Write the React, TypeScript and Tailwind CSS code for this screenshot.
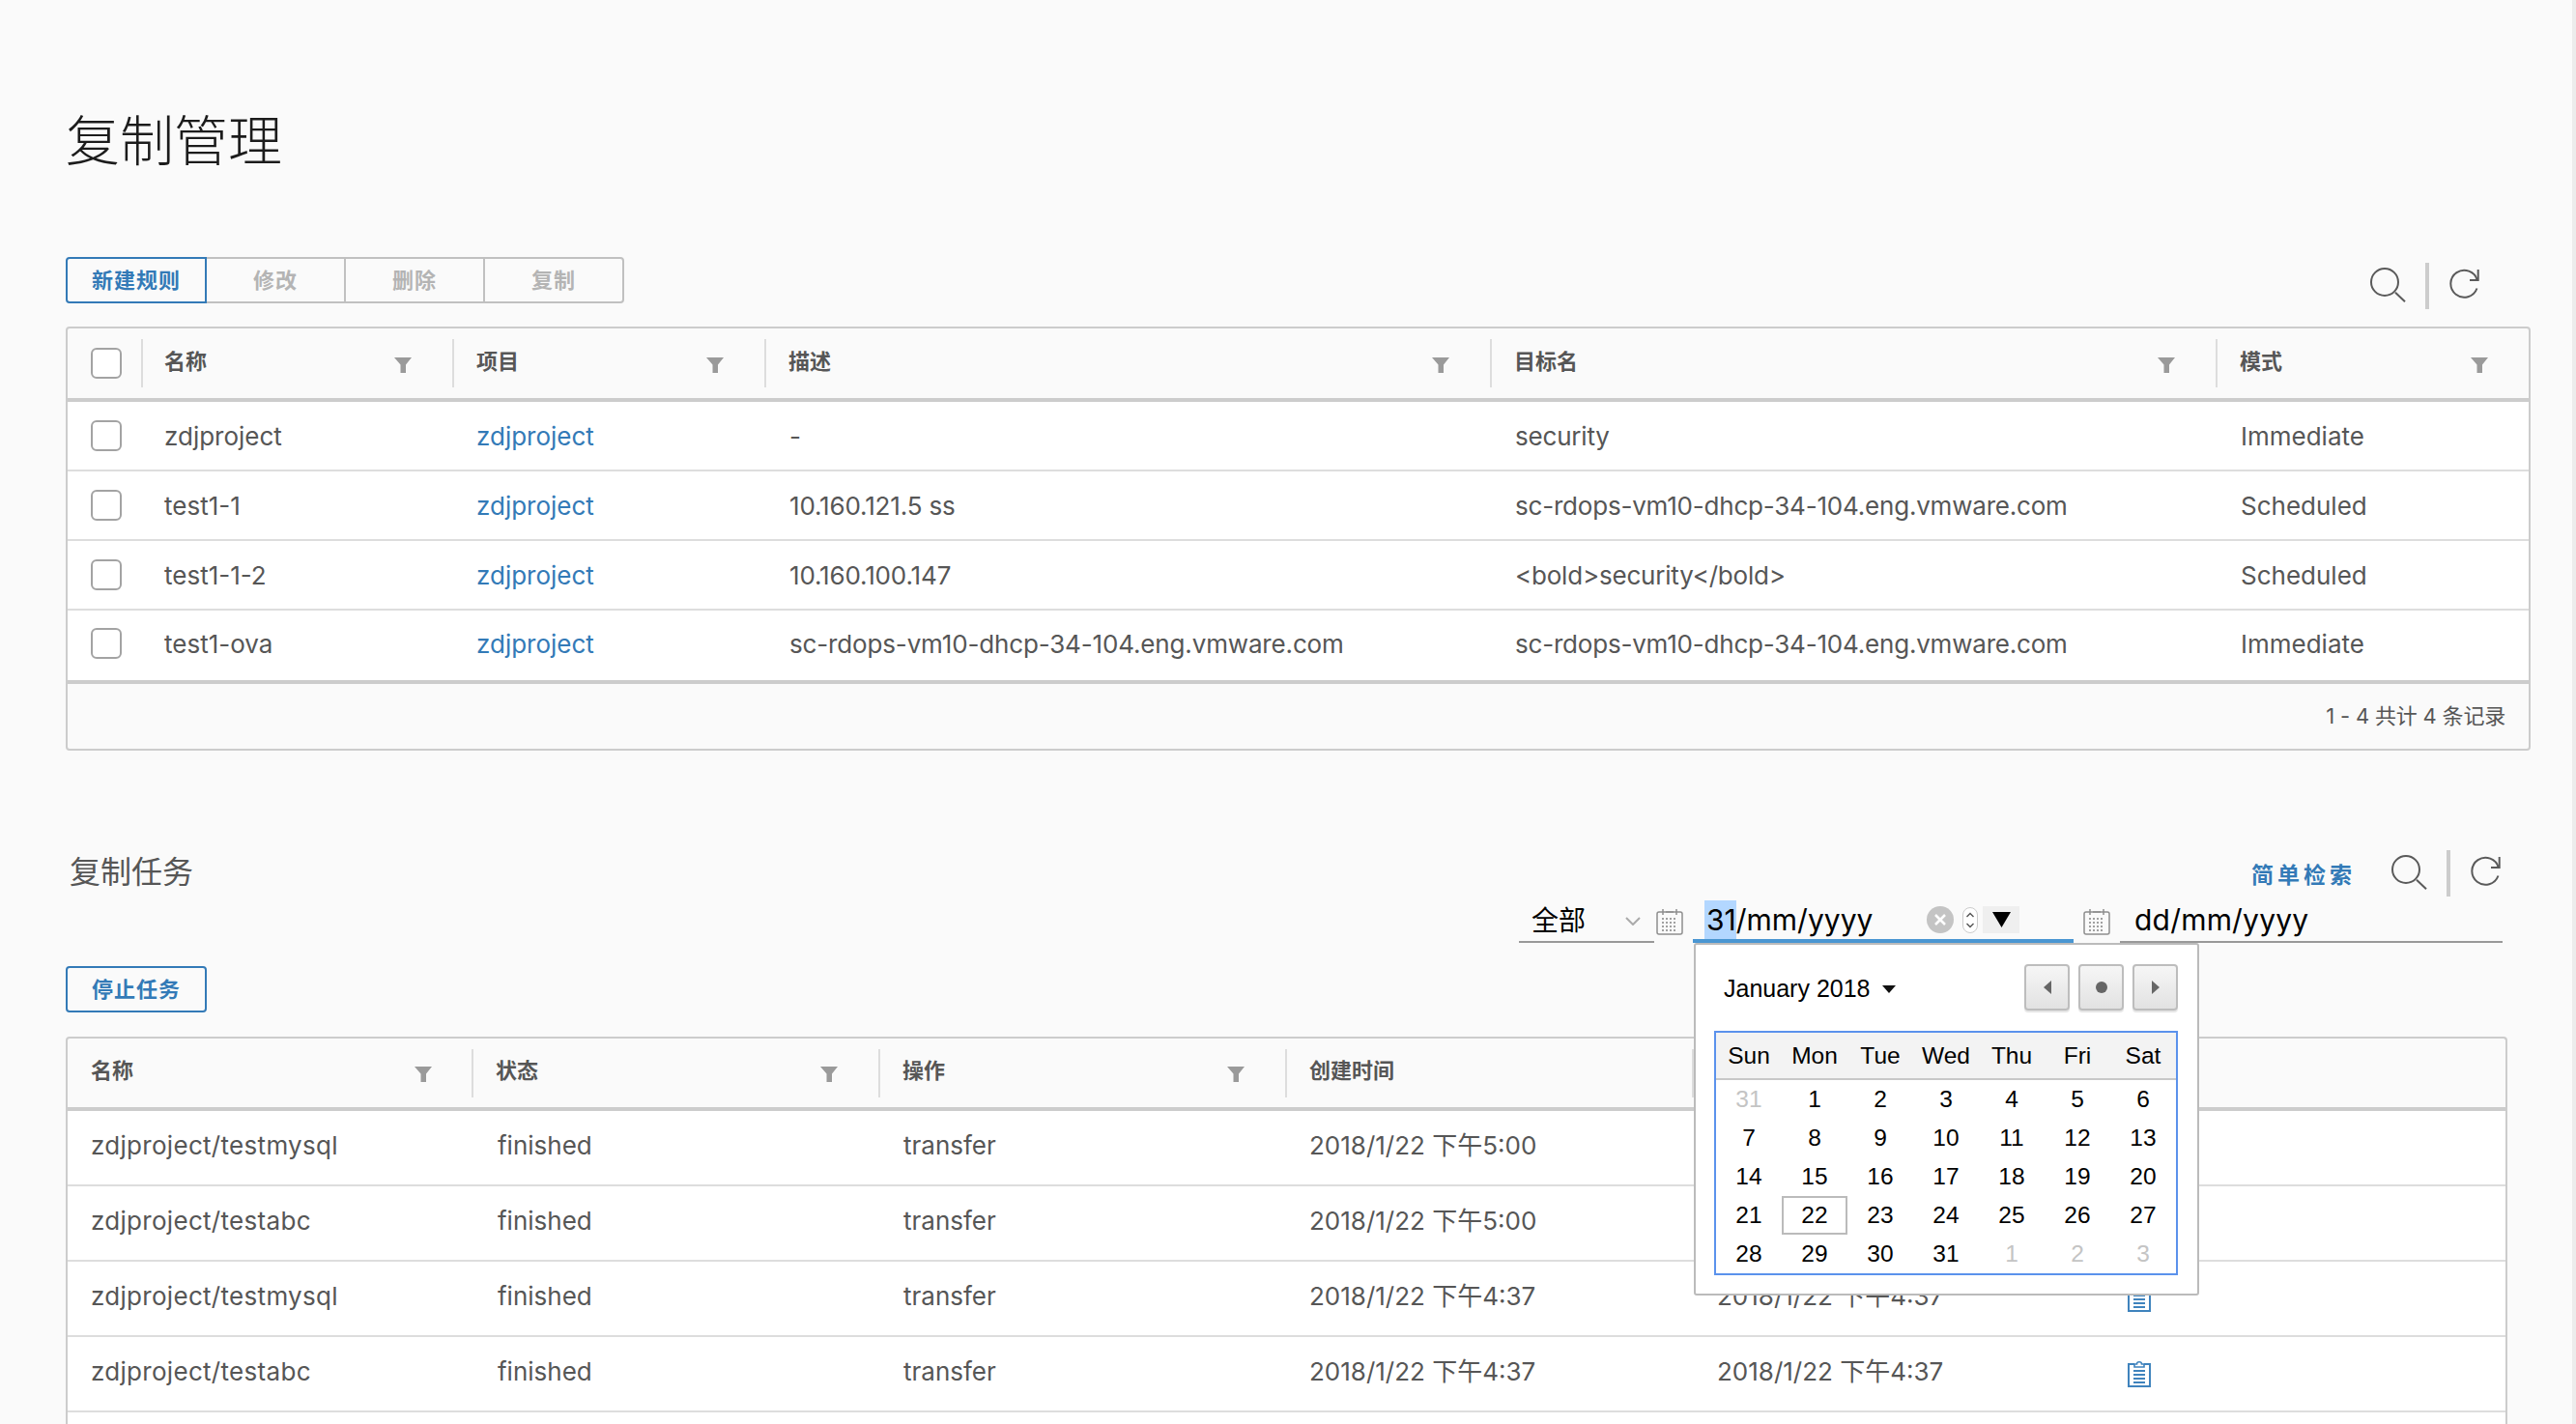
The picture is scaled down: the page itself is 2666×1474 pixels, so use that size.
import React from "react";

const ruleRows = [
  { name: "zdjproject", project: "zdjproject", desc: "-", target: "security", mode: "Immediate" },
  { name: "test1-1", project: "zdjproject", desc: "10.160.121.5 ss", target: "sc-rdops-vm10-dhcp-34-104.eng.vmware.com", mode: "Scheduled" },
  { name: "test1-1-2", project: "zdjproject", desc: "10.160.100.147", target: "<bold>security</bold>", mode: "Scheduled" },
  { name: "test1-ova", project: "zdjproject", desc: "sc-rdops-vm10-dhcp-34-104.eng.vmware.com", target: "sc-rdops-vm10-dhcp-34-104.eng.vmware.com", mode: "Immediate" },
];

// first two rows of the last columns sit behind the date popup
const jobRows = [
  { name: "zdjproject/testmysql", created: "2018/1/22 下午5:00", updated: "", log: false },
  { name: "zdjproject/testabc", created: "2018/1/22 下午5:00", updated: "", log: false },
  { name: "zdjproject/testmysql", created: "2018/1/22 下午4:37", updated: "2018/1/22 下午4:37", log: true },
  { name: "zdjproject/testabc", created: "2018/1/22 下午4:37", updated: "2018/1/22 下午4:37", log: true },
];

const weeks = [
  [31, 1, 2, 3, 4, 5, 6],
  [7, 8, 9, 10, 11, 12, 13],
  [14, 15, 16, 17, 18, 19, 20],
  [21, 22, 23, 24, 25, 26, 27],
  [28, 29, 30, 31, 1, 2, 3],
];

const FilterIcon = () => (
  <svg width="18" height="16" viewBox="0 0 18 16" className="shrink-0 mt-[3px]">
    <path d="M0 0H18L12 7.5V16H6.5V7.5Z" fill="#9a9a9a" />
  </svg>
);

const CalendarIcon = () => (
  <svg width="28" height="28" viewBox="0 0 28 28" fill="none" className="shrink-0">
    <rect x="1" y="4" width="26" height="23" rx="2" stroke="#8f8f8f" strokeWidth="1.5" />
    <path d="M7 1V7M21 1V7M10 4H18" stroke="#8f8f8f" strokeWidth="1.5" />
    <path d="M6 11H22M6 15H22M6 19H22M6 23H22" stroke="#a0a0a0" strokeWidth="2" strokeDasharray="2 2" />
  </svg>
);

const SearchRefresh = () => (
  <div className="flex items-start">
    <svg width="38" height="38" viewBox="0 0 38 38" fill="none" className="mt-[4px]">
      <circle cx="15" cy="16" r="14" stroke="#5a5a5a" strokeWidth="2" />
      <path d="M26 26.7L36 36.3" stroke="#5a5a5a" strokeWidth="2" />
    </svg>
    <div className="ml-[19px] w-[4px] h-[48px] bg-[#cccccc]" />
    <svg width="34" height="34" viewBox="0 0 34 34" fill="none" className="ml-[20px] mt-[4px]">
      <path d="M29.8 13.9A14 14 0 1 0 29.5 22.5" stroke="#5a5a5a" strokeWidth="2" />
      <path d="M30.7 3V14H22" stroke="#5a5a5a" strokeWidth="2" />
    </svg>
  </div>
);

const Checkbox = () => <div className="w-[32px] h-[32px] rounded-[6px] border-2 border-[#a3a3a3] bg-white" />;

const HeadCell = ({ label, filter = true }: { label?: string; filter?: boolean }) => (
  <div className="flex h-[50px] items-center justify-between border-l-2 border-[#dddddd] pl-[23px] pr-[42px]">
    <span className="text-[22px] font-semibold -translate-y-[2px]">{label}</span>
    {filter && <FilterIcon />}
  </div>
);

const ClipboardIcon = () => (
  <svg width="24" height="28" viewBox="0 0 24 28" fill="none">
    <path d="M7 4H1V27H23V4H17" stroke="#3f83bd" strokeWidth="2" />
    <path d="M7 7V4H9.5C9.5 1 14.5 1 14.5 4H17V7Z" stroke="#3f83bd" strokeWidth="1.6" />
    <path d="M6 11H18M6 15H18M6 19H18M6 23H18" stroke="#3f83bd" strokeWidth="2" />
  </svg>
);

const NavButton = ({ children }: { children: React.ReactNode }) => (
  <div className="flex w-[47px] h-[48px] items-center justify-center rounded-[4px] border-2 border-[#bdbdbd] bg-gradient-to-b from-[#f6f6f6] to-[#e2e2e2] shadow-[0_2px_1px_#e4e4e4]">
    {children}
  </div>
);

const DatePopup = () => (
  <div className="absolute left-[1px] top-[44px] z-10 w-[523px] h-[365px] rounded-[3px] border-2 border-[#bbbbbb] bg-white pt-[20px] pl-[19px] font-['Liberation_Sans',sans-serif] text-[24.5px] text-black">
    <div className="flex h-[48px] w-[480px] items-center justify-between">
      <div className="flex items-center pl-[10px] translate-y-[2px]">
        <span className="text-[25px]">January 2018</span>
        <svg width="14" height="8" viewBox="0 0 14 8" className="ml-[12px]">
          <path d="M0 0H14L7 8Z" fill="#111111" />
        </svg>
      </div>
      <div className="flex gap-[9px]">
        <NavButton>
          <svg width="8" height="14" viewBox="0 0 8 14">
            <path d="M8 0V14L0 7Z" fill="#666666" />
          </svg>
        </NavButton>
        <NavButton>
          <div className="w-[12px] h-[12px] rounded-full bg-[#666666]" />
        </NavButton>
        <NavButton>
          <svg width="8" height="14" viewBox="0 0 8 14">
            <path d="M0 0V14L8 7Z" fill="#666666" />
          </svg>
        </NavButton>
      </div>
    </div>
    <div className="mt-[21px] w-[480px] h-[253px] border-2 border-[#5b92ec]">
      <div className="grid h-[49px] grid-cols-7 items-center border-b-2 border-[#c8c8c8] bg-[#f3f3f3] text-center">
        {["Sun", "Mon", "Tue", "Wed", "Thu", "Fri", "Sat"].map((d) => (
          <span key={d} className="translate-y-[1px]">{d}</span>
        ))}
      </div>
      {weeks.map((week, w) => (
        <div key={w} className="grid h-[40px] grid-cols-7 text-center leading-[40px]">
          {week.map((day, i) => {
            const muted = (w === 0 && i === 0) || (w === 4 && i > 3);
            const today = w === 3 && i === 1;
            return (
              <div
                key={i}
                className={today ? "border-2 border-[#bbbbbb] leading-[36px]" : muted ? "text-[#c4c4c4]" : ""}
              >
                {day}
              </div>
            );
          })}
        </div>
      ))}
    </div>
  </div>
);

export default function App() {
  return (
    <div className="flex h-[1474px] overflow-hidden bg-[#fafafa] font-['Inter','Noto_Sans_CJK_SC',sans-serif] text-[#565656]">
      <main className="flex-1 pl-[68px]">
        <h1 className="mt-[106px] h-[80px] text-[56px] leading-[80px] font-extralight text-[#1c1c1c]">复制管理</h1>

        {/* Rules toolbar */}
        <div className="mt-[80px] flex h-[48px] w-[2551px] justify-between pr-[51px]">
          <div className="flex text-[22px] font-semibold tracking-[1px]">
            <button className="relative z-[1] h-[48px] w-[146px] rounded-l-[4px] border-2 border-[#337ab7] text-[#337ab7]">新建规则</button>
            <button className="-ml-[2px] h-[48px] w-[146px] border-2 border-[#c0c0c0] text-[#b4b4b4]">修改</button>
            <button className="-ml-[2px] h-[48px] w-[146px] border-2 border-[#c0c0c0] text-[#b4b4b4]">删除</button>
            <button className="-ml-[2px] h-[48px] w-[146px] rounded-r-[4px] border-2 border-[#c0c0c0] text-[#b4b4b4]">复制</button>
          </div>
          <div className="mt-[6px]">
            <SearchRefresh />
          </div>
        </div>

        {/* Rules table */}
        <div className="mt-[24px] w-[2551px] rounded-[4px] border-2 border-[#cccccc]">
          <div className="grid h-[76px] grid-cols-[76px_322px_323px_751px_751px_1fr] items-center border-b-4 border-[#cccccc]">
            <div className="pl-[24px]">
              <Checkbox />
            </div>
            <div className="flex h-[50px] items-center justify-between border-l-2 border-[#dddddd] pl-[22px] pr-[42px]">
              <span className="text-[22px] font-semibold -translate-y-[2px]">名称</span>
              <FilterIcon />
            </div>
            <HeadCell label="项目" />
            <HeadCell label="描述" />
            <HeadCell label="目标名" />
            <HeadCell label="模式" />
          </div>
          {ruleRows.map((row, i) => (
            <div
              key={i}
              className={`grid grid-cols-[76px_322px_323px_751px_751px_1fr] items-center bg-white text-[26px] ${
                i === 3 ? "h-[76px] border-b-4 border-[#cccccc] pb-[4px]" : "h-[72px] border-b-2 border-[#dddddd]"
              }`}
            >
              <div className="pl-[24px]">
                <Checkbox />
              </div>
              <div className="pl-[24px]">{row.name}</div>
              <div className="pl-[25px] text-[#337ab7]">{row.project}</div>
              <div className="pl-[26px] tracking-[-0.15px]">{row.desc}</div>
              <div className="pl-[26px] tracking-[-0.2px]">{row.target}</div>
              <div className="pl-[26px]">{row.mode}</div>
            </div>
          ))}
          <div className="flex h-[67px] items-center justify-end pr-[24px] text-[22px] tracking-[-0.2px]">1 - 4 共计 4 条记录</div>
        </div>

        {/* Jobs header */}
        <div className="mt-[105px] flex w-[2527px] justify-between pr-[5px]">
          <h2 className="ml-[4px] mt-[1px] text-[32px] leading-[40px]">复制任务</h2>
          <div className="flex flex-col items-end">
            <div className="flex h-[48px] items-center">
              <a className="mr-[37px] text-[23px] font-semibold tracking-[4px] text-[#337ab7]">简单检索</a>
              <div className="-mt-[4px]">
                <SearchRefresh />
              </div>
            </div>
            <div className="mt-[2px] flex h-[44px] text-black">
              <div className="flex w-[140px] items-center justify-between border-b-2 border-[#999999] pl-[13px] pr-[14px] text-[28px]">
                全部
                <svg width="16" height="9" viewBox="0 0 16 9" fill="none">
                  <path d="M1 1L8 8L15 1" stroke="#aaaaaa" strokeWidth="2" />
                </svg>
              </div>
              <div className="ml-[2px] flex items-center">
                <CalendarIcon />
              </div>
              <div className="relative ml-[10px] flex h-[44px] w-[394px] items-center border-b-4 border-[#4a96d2] pl-[12px] text-[30px]">
                <span className="flex h-[40px] items-center bg-[#b3d7ff] pl-[2px]">31</span>
                <span>/mm/yyyy</span>
                <div className="ml-auto mr-[56px] flex items-center">
                  <div className="flex h-[28px] w-[28px] items-center justify-center rounded-full bg-[#c4c4c4]">
                    <svg width="12" height="12" viewBox="0 0 12 12" fill="none">
                      <path d="M1 1L11 11M11 1L1 11" stroke="#ffffff" strokeWidth="2.5" />
                    </svg>
                  </div>
                  <div className="ml-[9px] flex h-[27px] w-[16px] items-center justify-center rounded-full border border-[#cccccc] bg-white">
                    <svg width="10" height="19" viewBox="0 0 10 19" fill="none">
                      <path d="M1.5 6L5 2.5L8.5 6M1.5 13L5 16.5L8.5 13" stroke="#555555" strokeWidth="1.4" />
                    </svg>
                  </div>
                  <div className="ml-[5px] flex h-[28px] w-[38px] items-center justify-center bg-[#efefef]">
                    <svg width="19" height="16" viewBox="0 0 19 16">
                      <path d="M0 0H19L9.5 16Z" fill="#000000" />
                    </svg>
                  </div>
                </div>
                <DatePopup />
              </div>
              <div className="ml-[10px] flex items-center">
                <CalendarIcon />
              </div>
              <div className="ml-[10px] flex h-[44px] w-[396px] items-center border-b-2 border-[#999999] pl-[15px] pb-[2px] text-[30px] tracking-[0.2px]">
                dd/mm/yyyy
              </div>
            </div>
          </div>
        </div>

        <button className="mt-[24px] block h-[48px] w-[146px] rounded-[4px] border-2 border-[#337ab7] text-[22px] font-semibold tracking-[1px] text-[#337ab7]">
          停止任务
        </button>

        {/* Jobs table */}
        <div className="mt-[25px] w-[2527px] rounded-t-[4px] border-2 border-b-0 border-[#cccccc]">
          <div className="grid h-[75px] grid-cols-[418px_421px_421px_421px_421px_1fr] items-center border-b-4 border-[#cccccc]">
            <div className="flex h-[50px] items-center justify-between pl-[24px] pr-[41px]">
              <span className="text-[22px] font-semibold -translate-y-[2px]">名称</span>
              <FilterIcon />
            </div>
            <HeadCell label="状态" />
            <HeadCell label="操作" />
            <HeadCell label="创建时间" filter={false} />
            <HeadCell filter={false} />
            <div />
          </div>
          {jobRows.map((row, i) => (
            <div
              key={i}
              className="grid h-[78px] grid-cols-[418px_421px_421px_421px_421px_1fr] items-center border-b-2 border-[#dddddd] bg-white text-[26px]"
            >
              <div className="pl-[24px] tracking-[0.3px] -translate-y-[3px]">{row.name}</div>
              <div className="pl-[27px] -translate-y-[3px]">finished</div>
              <div className="pl-[26px] -translate-y-[3px]">transfer</div>
              <div className="pl-[25px] -translate-y-[3px]">{row.created}</div>
              <div className="pl-[26px] -translate-y-[3px]">{row.updated}</div>
              <div className="pl-[30px]">{row.log && <ClipboardIcon />}</div>
            </div>
          ))}
          <div className="h-[78px] bg-white" />
        </div>
      </main>
      {/* Scrollbar track */}
      <div className="w-[4px] bg-[#ececec]" />
    </div>
  );
}
